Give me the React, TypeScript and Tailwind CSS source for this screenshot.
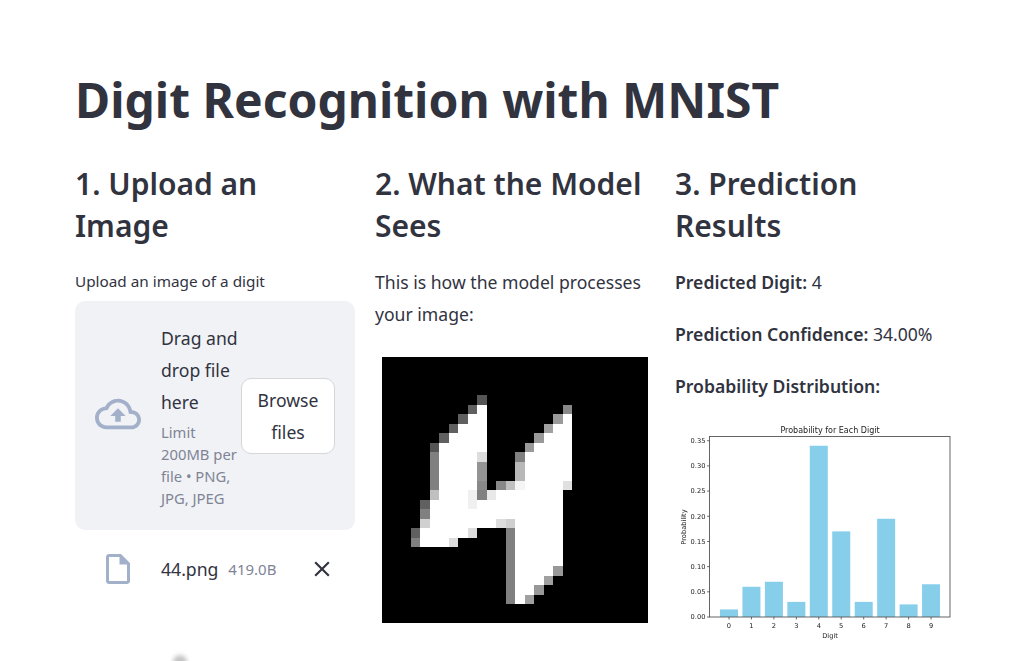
// Digit recognition page
const digitRuns: [number, number, number, string][] = [
  [4, 10, 10, "#555"],
  [5, 9, 9, "#606060"], [5, 10, 10, "#fff"], [5, 19, 19, "#888"],
  [6, 8, 8, "#606060"], [6, 9, 10, "#fff"], [6, 18, 18, "#9a9a9a"], [6, 19, 19, "#fff"],
  [7, 7, 7, "#606060"], [7, 8, 10, "#fff"], [7, 17, 17, "#a0a0a0"], [7, 18, 19, "#fff"],
  [8, 6, 6, "#606060"], [8, 7, 10, "#fff"], [8, 16, 16, "#999"], [8, 17, 19, "#fff"],
  [9, 5, 5, "#555"], [9, 6, 10, "#fff"], [9, 15, 15, "#999"], [9, 16, 19, "#fff"],
  [10, 5, 5, "#808080"], [10, 6, 9, "#fff"], [10, 10, 10, "#ddd"], [10, 14, 14, "#808080"], [10, 15, 19, "#fff"],
  [11, 5, 5, "#808080"], [11, 6, 9, "#fff"], [11, 10, 10, "#949494"], [11, 14, 14, "#b8b8b8"], [11, 15, 19, "#fff"],
  [12, 5, 5, "#808080"], [12, 6, 9, "#fff"], [12, 10, 10, "#949494"], [12, 14, 14, "#b8b8b8"], [12, 15, 19, "#fff"],
  [13, 5, 5, "#808080"], [13, 6, 9, "#fff"], [13, 10, 10, "#888"], [13, 12, 12, "#888"], [13, 13, 13, "#c0c0c0"], [13, 14, 14, "#f5f5f5"], [13, 15, 18, "#fff"], [13, 19, 19, "#e0e0e0"],
  [14, 5, 5, "#c0c0c0"], [14, 6, 8, "#fff"], [14, 9, 9, "#f0f0f0"], [14, 10, 10, "#808080"], [14, 11, 11, "#e8e8e8"], [14, 12, 18, "#fff"],
  [15, 4, 4, "#606060"], [15, 5, 8, "#fff"], [15, 9, 9, "#f0f0f0"], [15, 10, 18, "#fff"],
  [16, 4, 4, "#808080"], [16, 5, 18, "#fff"],
  [17, 4, 4, "#d0d0d0"], [17, 5, 11, "#fff"], [17, 12, 12, "#ddd"], [17, 13, 13, "#d0d0d0"], [17, 14, 18, "#fff"],
  [18, 3, 3, "#606060"], [18, 4, 8, "#fff"], [18, 9, 9, "#ddd"], [18, 13, 13, "#808080"], [18, 14, 18, "#fff"],
  [19, 3, 3, "#808080"], [19, 4, 6, "#fff"], [19, 7, 7, "#ddd"], [19, 13, 13, "#808080"], [19, 14, 18, "#fff"],
  [20, 13, 13, "#808080"], [20, 14, 18, "#fff"],
  [21, 13, 13, "#808080"], [21, 14, 18, "#fff"],
  [22, 13, 13, "#808080"], [22, 14, 17, "#fff"], [22, 18, 18, "#989898"],
  [23, 13, 13, "#808080"], [23, 14, 16, "#fff"], [23, 17, 17, "#a0a0a0"],
  [24, 13, 13, "#808080"], [24, 14, 15, "#fff"], [24, 16, 16, "#989898"],
  [25, 13, 13, "#808080"], [25, 14, 14, "#fff"], [25, 15, 15, "#a0a0a0"],
];

const probs = [0.015, 0.06, 0.07, 0.03, 0.34, 0.17, 0.03, 0.195, 0.025, 0.065];
const yTicks = [0, 0.05, 0.1, 0.15, 0.2, 0.25, 0.3, 0.35];

const DigitImage = () => (
  <div className="h-[266px] w-[266px] overflow-hidden bg-black">
    <svg viewBox="0 0 28 28" shapeRendering="crispEdges" className="w-[266px] h-[266px] blur-[0.3px]">
      {digitRuns.map(([r, a, b, fill], i) => (
        <rect key={i} x={a} y={r} width={b - a + 1} height={1} fill={fill} />
      ))}
    </svg>
  </div>
);

const ProbChart = () => {
  const y = (v: number) => 617 - v * 503.7;
  return (
    <svg viewBox="675 420 285 225" className="w-[285px] h-[225px] mt-[18px] blur-[0.75px]" fontFamily="'DejaVu Sans', sans-serif">
      <text x="830" y="433" fontSize="8" textAnchor="middle" fill="#222">Probability for Each Digit</text>
      {probs.map((p, i) => (
        <rect key={i} x={720 + i * 22.45} y={y(p)} width={18} height={617 - y(p)} fill="#87ceeb" />
      ))}
      <rect x="709.5" y="436.5" width="240.5" height="180.5" fill="none" stroke="#555" strokeWidth="0.9" />
      {yTicks.map((t) => (
        <g key={t}>
          <line x1="707" x2="709.5" y1={y(t)} y2={y(t)} stroke="#333" strokeWidth="0.7" />
          <text x="705.5" y={y(t) + 2.4} fontSize="6.7" textAnchor="end" fill="#222">{t.toFixed(2)}</text>
        </g>
      ))}
      {probs.map((_, i) => (
        <g key={i}>
          <line x1={729 + i * 22.45} x2={729 + i * 22.45} y1="617" y2="619.5" stroke="#333" strokeWidth="0.7" />
          <text x={729 + i * 22.45} y="627.5" fontSize="6.7" textAnchor="middle" fill="#222">{i}</text>
        </g>
      ))}
      <text x="830" y="637.5" fontSize="6.7" textAnchor="middle" fill="#222">Digit</text>
      <text x="0" y="0" fontSize="6.7" textAnchor="middle" fill="#222" transform="translate(685.5 527) rotate(-90)">Probability</text>
    </svg>
  );
};

export default function App() {
  return (
    <div className="relative h-[661px] overflow-hidden bg-white pl-[75px] pt-[67px] font-['Noto_Sans',sans-serif] text-[#31333f]">
      <h1 className="text-[48px] leading-[66px] font-bold">Digit Recognition with MNIST</h1>

      <div className="mt-[30px] flex gap-5">
        <div className="w-[280px]">
          <h2 className="text-[30px] leading-[42px] font-semibold">1. Upload an Image</h2>
          <p className="mt-[22px] text-[15.3px] leading-6">Upload an image of a digit</p>
          <div className="mt-2 flex items-center rounded-[10px] bg-[#f0f2f6] pl-5 pr-5 pt-[21px] pb-[21px]">
            <svg viewBox="0 0 24 24" className="mr-5 mb-[3px] w-[46px] h-[46px] shrink-0 fill-[#a3b0c9]">
              <path d="M19.35 10.04C18.67 6.59 15.64 4 12 4 9.11 4 6.6 5.64 5.35 8.04 2.34 8.36 0 10.91 0 14c0 3.31 2.69 6 6 6h13c2.76 0 5-2.24 5-5 0-2.64-2.05-4.78-4.65-4.96zM19 18H6c-2.21 0-4-1.79-4-4 0-2.05 1.53-3.76 3.56-3.97l1.07-.11.5-.95C8.08 7.14 9.94 6 12 6c2.62 0 4.88 1.86 5.39 4.43l.3 1.5 1.53.11c1.56.1 2.78 1.41 2.78 2.96 0 1.65-1.35 3-3 3zM8 13h2.55v3h2.9v-3H16l-4-4z" />
            </svg>
            <div className="w-[80px] shrink-0">
              <div className="text-[17.6px] leading-8">Drag and drop file here</div>
              <div className="mt-[3px] text-[14.8px] leading-[22px] text-[#808495]">Limit 200MB per file • PNG, JPG, JPEG</div>
            </div>
            <button className="h-[76px] w-[94px] shrink-0 rounded-[10px] border border-[#d6d6d9] bg-white text-[17.6px] leading-8">
              Browse files
            </button>
          </div>
          <div className="mt-[21px] flex items-center">
            <svg viewBox="0 0 24 24" className="ml-[25px] w-9 h-9 shrink-0 fill-[#a3b0c9]">
              <path d="M14 2H6c-1.1 0-1.99.9-1.99 2L4 20c0 1.1.89 2 1.99 2H18c1.1 0 2-.9 2-2V8l-6-6zM6 20V4h7v5h5v11H6z" />
            </svg>
            <span className="ml-[25px] text-[17.6px] leading-8">44.png</span>
            <span className="ml-[10px] text-[15px] text-[#808495]">419.0B</span>
            <svg viewBox="0 0 24 24" className="ml-auto mr-5 w-[26px] h-[26px] fill-[#31333f]">
              <path d="M19 6.41L17.59 5 12 10.59 6.41 5 5 6.41 10.59 12 5 17.59 6.41 19 12 13.41 17.59 19 19 17.59 13.41 12z" />
            </svg>
          </div>
        </div>

        <div className="w-[280px]">
          <h2 className="text-[30px] leading-[42px] font-semibold">2. What the Model Sees</h2>
          <p className="mt-[19px] text-[17.6px] leading-8">This is how the model processes your image:</p>
          <div className="mt-[27px] ml-[7px]">
            <DigitImage />
          </div>
        </div>

        <div className="w-[285px]">
          <h2 className="text-[30px] leading-[42px] font-semibold">3. Prediction Results</h2>
          <p className="mt-[19px] text-[17.6px] leading-8"><span className="font-semibold">Predicted Digit:</span> 4</p>
          <p className="mt-5 text-[17.6px] leading-8"><span className="font-semibold">Prediction Confidence:</span> 34.00%</p>
          <p className="mt-5 text-[17.6px] leading-8 font-semibold">Probability Distribution:</p>
          <ProbChart />
        </div>
      </div>

      <div className="absolute left-[173px] top-[655px] h-[14px] w-[14px] rounded-full bg-[#c4c4c4] blur-[2px]" />
    </div>
  );
}
